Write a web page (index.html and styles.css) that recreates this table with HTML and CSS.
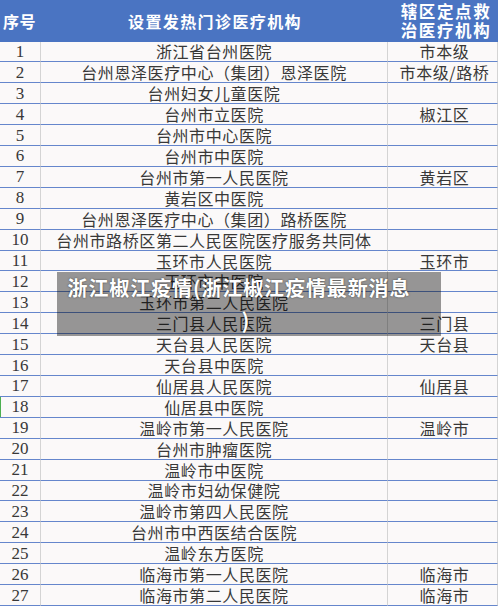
FILE: index.html
```html
<!DOCTYPE html>
<html lang="zh">
<head>
<meta charset="utf-8">
<title>浙江椒江疫情</title>
<link rel="stylesheet" href="styles.css">
</head>
<body>
<div class="page">
  <div class="sheet">
    <div class="hd c1">序号</div>
    <div class="hd c2">设置发热门诊医疗机构</div>
    <div class="hd c3"><span>辖区定点救</span><span>治医疗机构</span></div>

    <div class="cell c1">1</div><div class="cell c2">浙江省台州医院</div><div class="cell c3">市本级</div>
    <div class="cell c1">2</div><div class="cell c2">台州恩泽医疗中心（集团）恩泽医院</div><div class="cell c3">市本级/路桥</div>
    <div class="cell c1">3</div><div class="cell c2">台州妇女儿童医院</div><div class="cell c3"></div>
    <div class="cell c1">4</div><div class="cell c2">台州市立医院</div><div class="cell c3">椒江区</div>
    <div class="cell c1">5</div><div class="cell c2">台州市中心医院</div><div class="cell c3"></div>
    <div class="cell c1">6</div><div class="cell c2">台州市中医院</div><div class="cell c3"></div>
    <div class="cell c1">7</div><div class="cell c2">台州市第一人民医院</div><div class="cell c3">黄岩区</div>
    <div class="cell c1">8</div><div class="cell c2">黄岩区中医院</div><div class="cell c3"></div>
    <div class="cell c1">9</div><div class="cell c2">台州恩泽医疗中心（集团）路桥医院</div><div class="cell c3"></div>
    <div class="cell c1">10</div><div class="cell c2">台州市路桥区第二人民医院医疗服务共同体</div><div class="cell c3"></div>
    <div class="cell c1">11</div><div class="cell c2">玉环市人民医院</div><div class="cell c3">玉环市</div>
    <div class="cell c1">12</div><div class="cell c2">玉环市中医院</div><div class="cell c3"></div>
    <div class="cell c1">13</div><div class="cell c2">玉环市第二人民医院</div><div class="cell c3"></div>
    <div class="cell c1">14</div><div class="cell c2">三门县人民医院</div><div class="cell c3">三门县</div>
    <div class="cell c1">15</div><div class="cell c2">天台县人民医院</div><div class="cell c3">天台县</div>
    <div class="cell c1">16</div><div class="cell c2">天台县中医院</div><div class="cell c3"></div>
    <div class="cell c1">17</div><div class="cell c2">仙居县人民医院</div><div class="cell c3">仙居县</div>
    <div class="cell c1 mark">18</div><div class="cell c2">仙居县中医院</div><div class="cell c3"></div>
    <div class="cell c1">19</div><div class="cell c2">温岭市第一人民医院</div><div class="cell c3">温岭市</div>
    <div class="cell c1">20</div><div class="cell c2">台州市肿瘤医院</div><div class="cell c3"></div>
    <div class="cell c1">21</div><div class="cell c2">温岭市中医院</div><div class="cell c3"></div>
    <div class="cell c1">22</div><div class="cell c2">温岭市妇幼保健院</div><div class="cell c3"></div>
    <div class="cell c1">23</div><div class="cell c2">温岭市第四人民医院</div><div class="cell c3"></div>
    <div class="cell c1">24</div><div class="cell c2">台州市中西医结合医院</div><div class="cell c3"></div>
    <div class="cell c1">25</div><div class="cell c2">温岭东方医院</div><div class="cell c3"></div>
    <div class="cell c1">26</div><div class="cell c2">临海市第一人民医院</div><div class="cell c3">临海市</div>
    <div class="cell c1">27</div><div class="cell c2">临海市第二人民医院</div><div class="cell c3">临海市</div>
  </div>
  <div class="banner"><span class="line">浙江椒江疫情(浙江椒江疫情最新消息</span><span class="line close">)</span></div>
</div>
</body>
</html>
```

FILE: styles.css
```css
html, body {
  margin: 0;
  padding: 0;
  background: #ffffff;
}
.page {
  position: relative;
  width: 500px;
  height: 608px;
  overflow: hidden;
}
.sheet {
  display: grid;
  grid-template-columns: 41px 347px 110px;
  grid-template-rows: 41.5px;
  grid-auto-rows: 20.92px;
  width: 498px;
  background: #fbf9f9;
  font-family: "Noto Sans CJK SC", "Liberation Serif", serif;
  color: #383838;
  font-size: 16px;
}
.hd {
  background: #4a74c2;
  color: #ffffff;
  font-weight: bold;
  font-size: 16px;
  letter-spacing: 1.4px;
  display: flex;
  align-items: center;
  justify-content: center;
  line-height: 18px;
  text-align: center;
}
.hd.c1 {
  justify-content: flex-start;
  padding-left: 3px;
  letter-spacing: 0.5px;
}
.hd.c2 {
  justify-content: flex-start;
  padding-left: 87px;
}
.hd.c3 {
  flex-direction: column;
  gap: 1px;
  font-size: 16.5px;
  letter-spacing: 1.6px;
  padding-left: 6px;
}
.cell {
  box-sizing: border-box;
  border-bottom: 1px solid #6586cc;
  border-right: 1px solid #d4d4d4;
  display: flex;
  align-items: center;
  justify-content: center;
  line-height: 1;
  white-space: nowrap;
  letter-spacing: 0.6px;
}
.cell.c1 {
  font-family: "Liberation Serif", serif;
  font-size: 17px;
  letter-spacing: 0;
}
.cell.c3 {
  padding-left: 4px;
}
.cell.mark {
  box-shadow: inset 1px 0 0 #4caf50;
}
.banner {
  position: absolute;
  left: 57px;
  top: 272px;
  width: 384px;
  height: 64px;
  box-sizing: border-box;
  padding: 0 30px 0 10px;
  background: rgba(0, 0, 0, 0.4);
  color: #ffffff;
  font-family: "Noto Sans CJK SC", "Noto Sans", sans-serif;
  font-weight: bold;
  font-size: 20px;
  line-height: 32px;
  letter-spacing: 0.9px;
  display: flex;
  flex-direction: column;
  align-items: center;
  text-shadow: 0 0 2px rgba(0, 0, 0, 0.6);
}
.banner .line {
  white-space: nowrap;
}
.banner .close {
  padding-left: 14px;
  font-size: 21px;
}
```
